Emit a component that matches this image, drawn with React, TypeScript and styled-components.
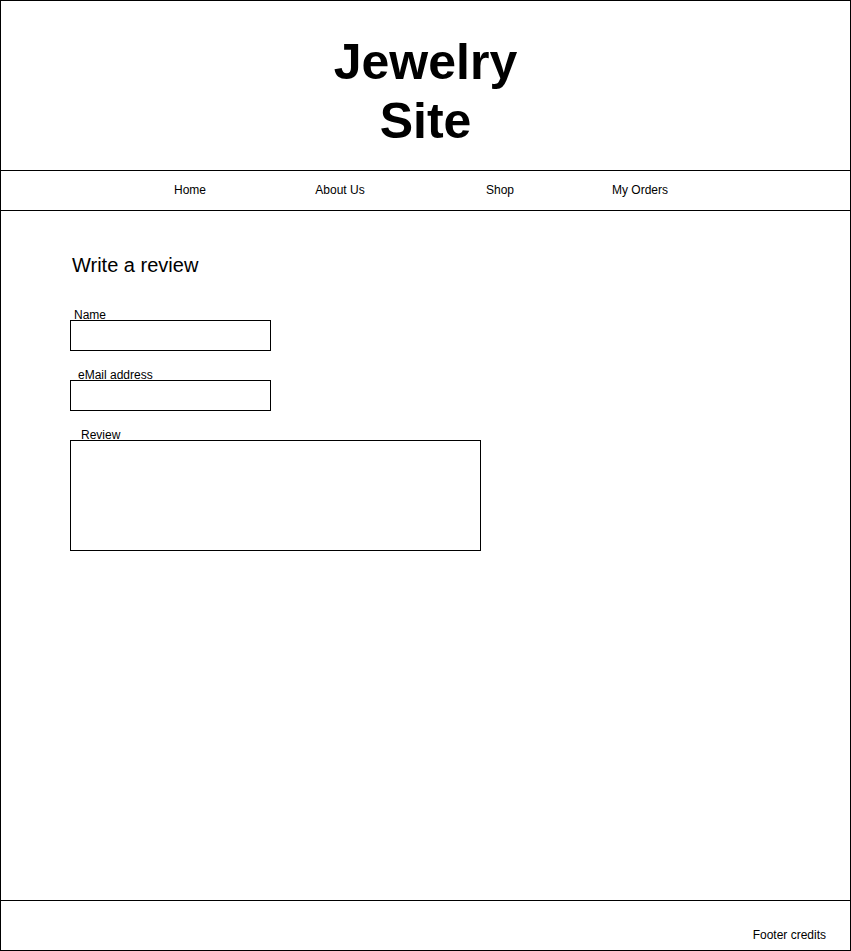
import React from "react";
import styled, { createGlobalStyle } from "styled-components";

const GlobalStyle = createGlobalStyle`
  html, body {
    margin: 0;
    padding: 0;
    background: #ffffff;
  }
  * { box-sizing: border-box; }
  body {
    font-family: "Liberation Sans", Arial, Helvetica, sans-serif;
    color: #000;
  }
`;

const Frame = styled.div`
  width: 851px;
  height: 951px;
  border: 1px solid #000;
  display: flex;
  flex-direction: column;
  background: #fff;
`;

const Header = styled.header`
  height: 170px;
  border-bottom: 1px solid #000;
  display: flex;
  align-items: center;
  justify-content: center;
  padding-top: 12px;
`;

const Title = styled.h1`
  margin: 0;
  font-family: "Liberation Sans", Arial, sans-serif;
  font-weight: 700;
  font-size: 50px;
  line-height: 59px;
  text-align: center;
  width: 200px;
`;

const Nav = styled.nav`
  height: 40px;
  border-bottom: 1px solid #000;
  display: grid;
  grid-template-columns: 100px 200px 120px 160px;
  align-items: center;
  padding-left: 139px;
  padding-bottom: 2px;
`;

const NavItem = styled.a`
  font-size: 12px;
  line-height: 14px;
  color: #000;
  text-decoration: none;
  text-align: center;
`;

const Main = styled.main`
  flex: 1;
  padding: 42px 0 0 69px;
  display: flex;
  flex-direction: column;
  align-items: flex-start;
`;

const Heading = styled.h2`
  margin: 0 0 33px 2px;
  font-size: 20px;
  line-height: 24px;
  font-weight: 400;
`;

const Field = styled.div`
  display: flex;
  flex-direction: column;
  align-items: flex-start;
  margin-bottom: 19px;
`;

const Label = styled.label<{ $indent: number }>`
  font-size: 12px;
  line-height: 10px;
  padding-left: ${(p) => p.$indent}px;
`;

const TextInput = styled.input`
  width: 201px;
  height: 31px;
  border: 1px solid #000;
  border-radius: 0;
  margin: 0;
  padding: 4px;
  font: inherit;
  outline: none;
  background: #fff;
`;

const TextArea = styled.textarea`
  width: 411px;
  height: 111px;
  border: 1px solid #000;
  border-radius: 0;
  margin: 0;
  padding: 4px;
  font: inherit;
  resize: none;
  outline: none;
  background: #fff;
`;

const Footer = styled.footer`
  height: 50px;
  border-top: 1px solid #000;
  display: flex;
  justify-content: flex-end;
  align-items: flex-end;
  padding: 0 24px 8px 0;
`;

const Credits = styled.span`
  font-size: 12px;
  line-height: 14px;
`;

export default function App() {
  return (
    <>
      <GlobalStyle />
      <Frame>
        <Header>
          <Title>Jewelry Site</Title>
        </Header>
        <Nav>
          <NavItem>Home</NavItem>
          <NavItem>About Us</NavItem>
          <NavItem>Shop</NavItem>
          <NavItem>My Orders</NavItem>
        </Nav>
        <Main>
          <Heading>Write a review</Heading>
          <Field>
            <Label $indent={4} htmlFor="name">Name</Label>
            <TextInput id="name" type="text" />
          </Field>
          <Field>
            <Label $indent={8} htmlFor="email">eMail address</Label>
            <TextInput id="email" type="email" />
          </Field>
          <Field>
            <Label $indent={11} htmlFor="review">Review</Label>
            <TextArea id="review" />
          </Field>
        </Main>
        <Footer>
          <Credits>Footer credits</Credits>
        </Footer>
      </Frame>
    </>
  );
}
